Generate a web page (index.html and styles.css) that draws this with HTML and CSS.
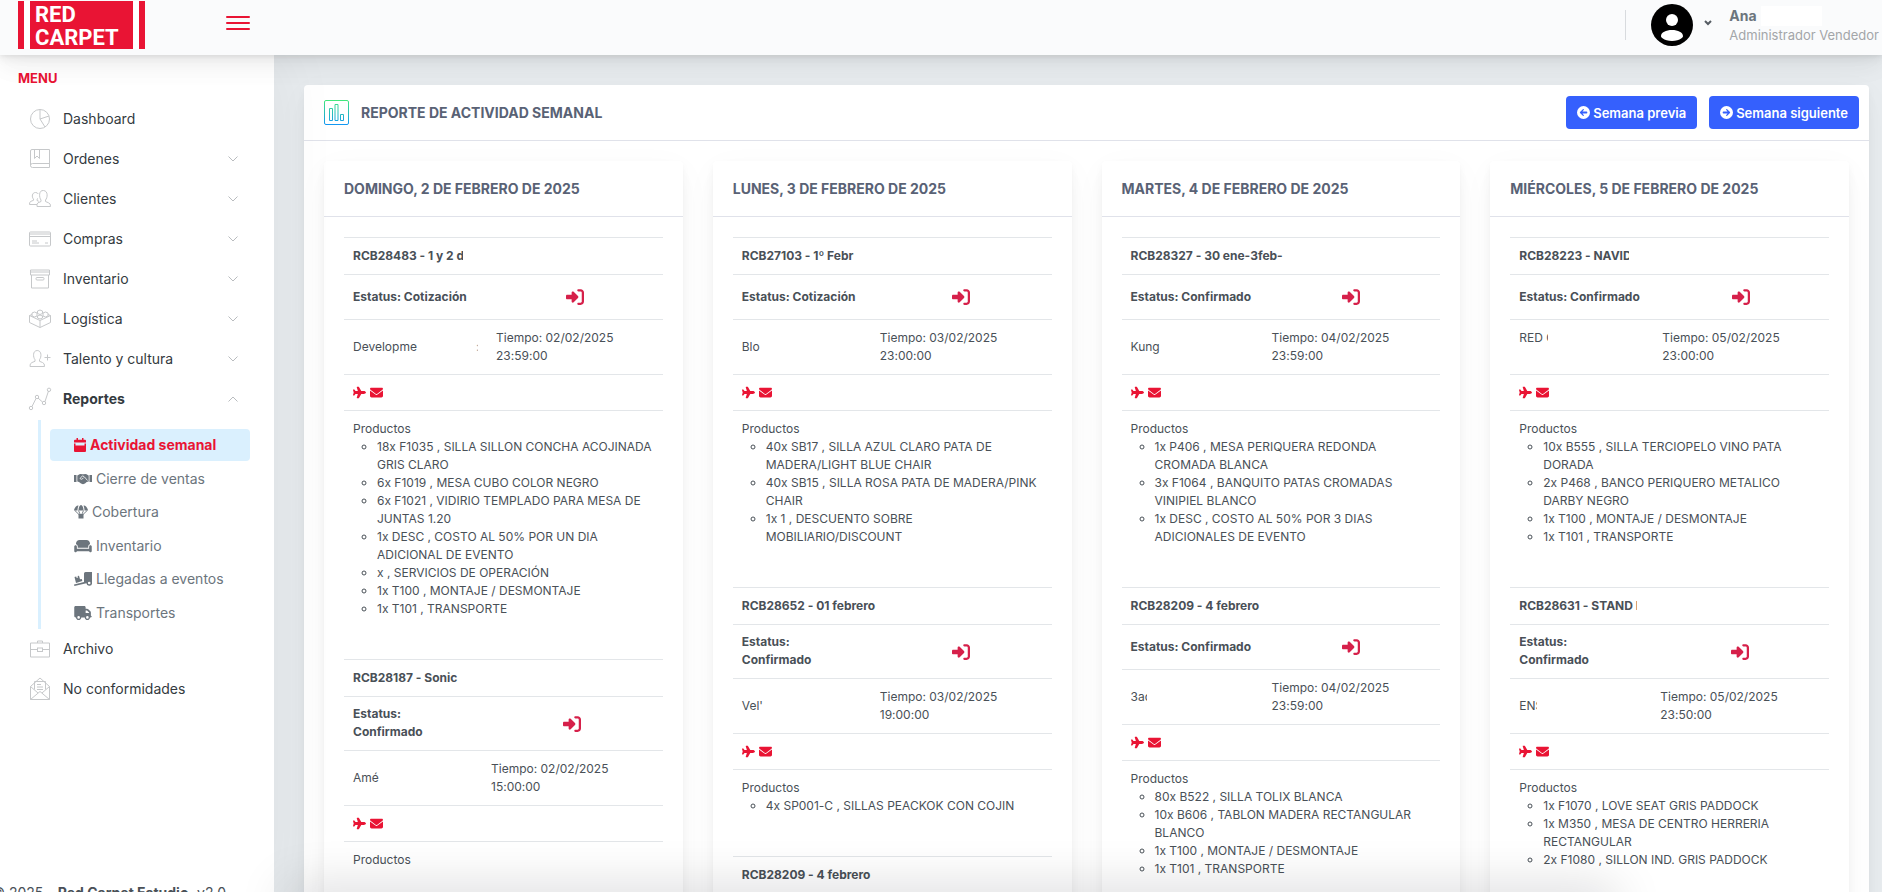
FILE: index.html
```html
<!DOCTYPE html>
<html lang="es">
<head>
<meta charset="utf-8">
<meta name="viewport" content="width=device-width, initial-scale=1">
<title>Reporte de actividad semanal</title>
<link rel="stylesheet" href="styles.css">
</head>
<body>
<svg class="sprite" aria-hidden="true">
  <symbol id="plane" viewBox="0 0 576 512"><path d="M482.3 192c34.2 0 93.7 29 93.7 64c0 36-59.5 64-93.7 64l-116.6 0L265.2 495.9c-5.7 10-16.3 16.1-27.8 16.1l-56.2 0c-10.6 0-18.3-10.2-15.4-20.4l49-171.6L112 320 68.8 377.6c-3 4-7.8 6.4-12.8 6.4l-42 0c-7.8 0-14-6.3-14-14c0-1.3 .2-2.6 .5-3.9L32 256 .5 145.9c-.4-1.3-.5-2.6-.5-3.9c0-7.8 6.3-14 14-14l42 0c5 0 9.8 2.4 12.8 6.4L112 192l102.9 0-49-171.6C162.9 10.2 170.6 0 181.2 0l56.2 0c11.5 0 22.1 6.2 27.8 16.1L365.7 192l116.6 0z"/></symbol>
  <symbol id="mail" viewBox="0 0 512 512"><path d="M48 64C21.5 64 0 85.5 0 112c0 15.1 7.1 29.3 19.2 38.4L236.8 313.6c11.4 8.5 27 8.5 38.4 0L492.8 150.4c12.1-9.1 19.2-23.3 19.2-38.4c0-26.5-21.5-48-48-48L48 64zM0 176L0 384c0 35.3 28.7 64 64 64l384 0c35.3 0 64-28.7 64-64l0-208L294.4 339.2c-22.8 17.1-54 17.1-76.8 0L0 176z"/></symbol>
  <symbol id="enter" viewBox="0 0 512 512"><path d="M217.9 105.9L340.7 228.7c7.2 7.2 11.3 17.1 11.3 27.3s-4.1 20.1-11.3 27.3L217.9 406.1c-6.4 6.4-15 9.9-24 9.9c-18.7 0-33.9-15.2-33.9-33.9l0-62.1L32 320c-17.7 0-32-14.3-32-32l0-64c0-17.7 14.3-32 32-32l128 0 0-62.1c0-18.7 15.2-33.9 33.9-33.9c9 0 17.6 3.6 24 9.9zM352 416l64 0c17.7 0 32-14.3 32-32l0-256c0-17.7-14.3-32-32-32l-64 0c-17.7 0-32-14.3-32-32s14.3-32 32-32l64 0c53 0 96 43 96 96l0 256c0 53-43 96-96 96l-64 0c-17.7 0-32-14.3-32-32s14.3-32 32-32z"/></symbol>
  <symbol id="circle-left" viewBox="0 0 512 512"><path d="M512 256A256 256 0 1 0 0 256a256 256 0 1 0 512 0zM231 127c9.4-9.4 24.6-9.4 33.9 0s9.4 24.6 0 33.9l-50 57L376 218c18 0 32 16 32 38s-14 38-32 38l-161.1 0 50 57c9.4 9.4 9.4 24.6 0 33.9s-24.6 9.4-33.9 0L119 273c-9.4-9.4-9.4-24.6 0-33.9L231 127z"/></symbol>
  <symbol id="circle-right" viewBox="0 0 512 512"><path transform="matrix(-1 0 0 1 512 0)" d="M512 256A256 256 0 1 0 0 256a256 256 0 1 0 512 0zM231 127c9.4-9.4 24.6-9.4 33.9 0s9.4 24.6 0 33.9l-50 57L376 218c18 0 32 16 32 38s-14 38-32 38l-161.1 0 50 57c9.4 9.4 9.4 24.6 0 33.9s-24.6 9.4-33.9 0L119 273c-9.4-9.4-9.4-24.6 0-33.9L231 127z"/></symbol>
  <symbol id="down" viewBox="0 0 10 6"><path d="M.5.5 5 5 9.5.5" fill="none" stroke="currentColor"/></symbol>
  <symbol id="up" viewBox="0 0 10 6"><path d="M.5 5.5 5 1l4.500 4.500" fill="none" stroke="currentColor"/></symbol>
</svg>

<header class="topbar">
  <a class="logo" href="#" aria-label="Red Carpet">
    <span class="logo-box"><span>RED</span><span>CARPET</span></span>
  </a>
  <button class="burger" type="button" aria-label="Menú"><i></i><i></i><i></i></button>
  <div class="user">
    <button class="user-btn" type="button" aria-label="Cuenta">
      <svg width="42" height="42" viewBox="0 0 42 42"><circle cx="21" cy="21" r="21"/><circle cx="21" cy="16" r="6" fill="#fff"/><path d="M21 26c6 0 11 2.500 11 6 0 1-.6 1.600-1.500 2.200C28 36 25 37 21 37s-7-1-9.500-2.800C10.600 33.600 10 33 10 32c0-3.500 5-6 11-6z" fill="#fff"/></svg>
      <svg class="caret" width="8" height="6" viewBox="0 0 8 6"><path d="M1 1l3 3 3-3" fill="none" stroke="#555c63" stroke-width="2"/></svg>
    </button>
    <div class="who">
      <div class="name">Ana <span class="blank"></span></div>
      <div class="role">Administrador Vendedor</div>
    </div>
  </div>
</header>

<div class="shell">
<nav class="sidebar">
  <h2 class="menu-title">MENU</h2>
  <ul class="menu">
    <li><a href="#"><svg class="ic" viewBox="0 0 22 22"><circle cx="11" cy="11" r="9.500"/><path d="M11 1.500V11l5 8M11 11l9-3"/></svg>Dashboard</a></li>
    <li><a href="#"><svg class="ic" viewBox="0 0 22 22"><path d="M3 1.500h17.500v18H3.500q-2 0-2-2V3q0-1.500 1.500-1.500M1.500 17.500q0-2 2-2h17M5.500 1.500v9L8 8l2.500 2.500v-9"/></svg>Ordenes<svg class="chev"><use href="#down"/></svg></a></li>
    <li><a href="#"><svg class="ic" viewBox="0 0 22 22"><path d="M8 18.500h13.500q.3-3-2-3.700l-3-1.300v-1.500c2-2 3-9-2-9.500-5-.5-4.500 7-2.500 9.500v1.500l-3 1.300Q7.500 15.500 8 18.500zM8 16.500H.5q-.3-2.500 1.500-3.200l2.500-1v-1.200C2.500 9 3 4.500 6.500 4.500q2 0 2.800 1.500M9 10.500l-1 .8v1.200l1.800.8"/></svg>Clientes<svg class="chev"><use href="#down"/></svg></a></li>
    <li><a href="#"><svg class="ic" viewBox="0 0 22 22"><rect x=".5" y="4" width="21" height="14" rx="1"/><path d="M.5 6h21M.5 8.500h21M3 13h5M3 15h7M16 15h3"/></svg>Compras<svg class="chev"><use href="#down"/></svg></a></li>
    <li><a href="#"><svg class="ic" viewBox="0 0 22 22"><path d="M1.500 2h19v5h-19zM2.500 7v13h17V7M1.500 4h19"/><rect x="7" y="9.500" width="8" height="2.500" rx="1"/></svg>Inventario<svg class="chev"><use href="#down"/></svg></a></li>
    <li><a href="#"><svg class="ic" viewBox="0 0 22 22"><path d="M.5 7.500v7L11 19.500l10.500-5v-7M.5 7.500 11 12.500l10.500-5M11 12.500v7M.5 7.500l2.500-1M21.500 7.500 19 6.500"/><path d="M3 8V5q2.500-2 5 0v3q-2.500 2-5 0M14 8V5q2.500-2 5 0v3q-2.500 2-5 0M8.500 10V8q2.500-2 5 0v2q-2.500 2-5 0M8.500 5.500V3q2.500-2 5 0v2.500q-2.500 2-5 0"/></svg>Logística<svg class="chev"><use href="#down"/></svg></a></li>
    <li><a href="#"><svg class="ic" viewBox="0 0 22 22"><path d="M1 18.500h14.500q.3-3.200-2-4l-3-1.200v-1.600c2-2.500 2.500-9-2.300-9.200-4.700.2-4.200 6.700-2.200 9.200v1.600l-3 1.200q-2.300.8-2 4zM15.500 9.500h6M18.500 6.500v6"/></svg>Talento y cultura<svg class="chev"><use href="#down"/></svg></a></li>
    <li>
      <a class="open" href="#"><svg class="ic" viewBox="0 0 22 22"><path d="m3 18.500 4-8M9 10l4.500 4M16 13.500 19.500 3"/><circle cx="2" cy="20" r="1.700"/><circle cx="8" cy="9" r="1.700"/><circle cx="15" cy="15" r="1.700"/><circle cx="20" cy="1.800" r="1.700"/></svg>Reportes<svg class="chev"><use href="#up"/></svg></a>
      <ul class="sub">
        <li><a class="active" href="#"><svg width="12" height="14" viewBox="0 0 12 14"><path d="M2.500 0h1.500v1.700h4V0h1.500v1.700H11q1 0 1 1V4.500H0V2.700q0-1 1-1h1.500zM0 5.500h1.500v2h9v-2H12V13q0 1-1 1H1q-1 0-1-1z"/></svg>Actividad semanal</a></li>
        <li><a href="#"><svg width="18" height="14" viewBox="0 0 18 14"><path d="M0 3h2.500v7H0zM15.500 3H18v7h-2.500z"/><path d="M3.300 3.500 6 2l3 .3L12 2l2.700 1.500V9.500l-2 .5-1.700 1.500-2 .8L7 11.500 5 10l-1.700-.5z"/><path d="M6 6.500 8.500 3.800 10.500 5l3 3.500M6 6.500l1.500.8L9.500 6" fill="none" stroke="#fff" stroke-width=".8"/></svg>Cierre de ventas</a></li>
        <li><a href="#"><svg width="14" height="14" viewBox="0 0 14 14"><path d="M0 5.500C.3 2.500 3 0 4.500.5 3.800 2 3.500 3.800 3.500 5.500zM4.500 5.500C4.500 2.500 5.600 0 7 0s2.500 2.500 2.500 5.500zM10.500 5.500c0-1.700-.3-3.500-1-5C11 0 13.700 2.500 14 5.500zM4.500 9h5v4.500h-5z"/><path d="M.8 5.500 5 9.500M13.200 5.500 9 9.500M4.500 5.500 6 9M9.500 5.500 8 9" fill="none" stroke="currentColor" stroke-width=".9"/></svg>Cobertura</a></li>
        <li><a href="#"><svg width="18" height="14" viewBox="0 0 640 512"><path d="M64 160C64 89.300 121.300 32 192 32l256 0c70.700 0 128 57.300 128 128l0 33.600c-36.500 7.400-64 39.700-64 78.400l0 48-384 0 0-48c0-38.700-27.500-71-64-78.400L64 160zM544 272c0-20.900 13.400-38.700 32-45.300c5-1.800 10.400-2.700 16-2.700c26.500 0 48 21.500 48 48l0 176c0 17.700-14.300 32-32 32l-32 0c-17.700 0-32-14.300-32-32L96 448c0 17.700-14.300 32-32 32l-32 0c-17.700 0-32-14.300-32-32L0 272c0-26.500 21.500-48 48-48c5.600 0 11 1 16 2.700c18.600 6.600 32 24.400 32 45.300l0 48 0 32 32 0 384 0 32 0 0-32 0-48z"/></svg>Inventario</a></li>
        <li><a href="#"><svg width="18" height="14" viewBox="0 0 18 14"><path fill-rule="evenodd" d="M11.500 0H18v10.500a2.800 2.800 0 1 1-5.600.7L.4 14 0 12.600 10 10V1.500Q10 0 11.500 0zM15.200 9.700a1.300 1.300 0 1 0 0 2.600 1.300 1.300 0 0 0 0-2.600z"/><path d="m.5 5 1.700-.5.5 1.500 1.300-.4-.4-1.500L5 3.700l1 3.600L7.800 7l.5 2-6.300 2z"/></svg>Llegadas a eventos</a></li>
        <li><a href="#"><svg width="18" height="14" viewBox="0 0 640 512"><path d="M48 0C21.500 0 0 21.500 0 48L0 368c0 26.500 21.500 48 48 48l16 0c0 53 43 96 96 96s96-43 96-96l128 0c0 53 43 96 96 96s96-43 96-96l32 0c17.700 0 32-14.300 32-32s-14.300-32-32-32l0-64 0-32 0-18.700c0-17-6.700-33.300-18.700-45.300L512 114.700c-12-12-28.300-18.700-45.300-18.700L416 96l0-48c0-26.500-21.500-48-48-48L48 0zM416 160l50.700 0L544 237.300l0 18.700-128 0 0-96zM112 416a48 48 0 1 1 96 0 48 48 0 1 1 -96 0zm368-48a48 48 0 1 1 0 96 48 48 0 1 1 0-96z"/></svg>Transportes</a></li>
      </ul>
    </li>
    <li><a href="#"><svg class="ic" viewBox="0 0 22 22"><path d="M1.500 5h19v14h-19zM1.500 11.500h7M13.500 11.500h7M8.500 5V3h5v2"/><rect x="8.500" y="10" width="5" height="3.500"/></svg>Archivo</a></li>
    <li><a href="#"><svg class="ic" viewBox="0 0 22 22"><path d="M1.500 8.500v13h19v-13L11 0 1.500 8.500zM1.500 8.500 9 15M20.500 8.500 13 15M1.500 21.500l9.500-8 9.500 8M5.500 11.500V3.500h11v8M8 6.500h4M8 9h6M8 11.500h6"/></svg>No conformidades</a></li>
  </ul>
  <p class="copyright">© 2025 - <b>Red Carpet Estudio.</b> v2.0</p>
</nav>

<main class="main">
  <section class="panel">
    <div class="panel-head">
      <svg class="chart" width="25" height="25" viewBox="0 0 25 25" stroke="url(#grad)"><defs><linearGradient id="grad" gradientUnits="userSpaceOnUse" x1="0" y1="0" x2="0" y2="25"><stop offset="0" stop-color="#43e97b"/><stop offset="1" stop-color="#1296f5"/></linearGradient></defs><rect x=".5" y=".5" width="24" height="24" rx="1.500"/><path d="M5.500 8.500h3v12h-3zM11 4.500h3v16h-3zM16.500 14.500h3v6h-3z"/></svg>
      <h1>REPORTE DE ACTIVIDAD SEMANAL</h1>
      <button class="btn" type="button"><svg><use href="#circle-left"/></svg>Semana previa</button>
      <button class="btn" type="button"><svg><use href="#circle-right"/></svg>Semana siguiente</button>
    </div>
    <div class="days">

      <article class="day">
        <h2>DOMINGO, 2 DE FEBRERO DE 2025</h2>
        <div class="orders">
          <table class="w45">
            <tr><th colspan="2"><span class="cut cut-110">RCB28483 - 1 y 2 d</span></th></tr>
            <tr><th>Estatus: Cotización</th><td class="go"><a href="#" aria-label="Abrir"><svg><use href="#enter"/></svg></a></td></tr>
            <tr><td><span class="split"><span>Developme</span><span class="cut cut-2">:</span></span></td><td class="when">Tiempo: 02/02/2025 23:59:00</td></tr>
            <tr><td colspan="2" class="flags"><svg><use href="#plane"/></svg><svg><use href="#mail"/></svg></td></tr>
            <tr><td colspan="2">Productos
              <ul><li>18x F1035 , SILLA SILLON CONCHA ACOJINADA GRIS CLARO</li><li>6x F1019 , MESA CUBO COLOR NEGRO</li><li>6x F1021 , VIDIRIO TEMPLADO PARA MESA DE JUNTAS 1.20</li><li>1x DESC , COSTO AL 50% POR UN DIA ADICIONAL DE EVENTO</li><li>x , SERVICIOS DE OPERACIÓN</li><li>1x T100 , MONTAJE / DESMONTAJE</li><li>1x T101 , TRANSPORTE</li></ul></td></tr>
          </table>
          <table class="w43">
            <tr><th colspan="2">RCB28187 - Sonic</th></tr>
            <tr class="tall"><th>Estatus:<br>Confirmado</th><td class="go"><a href="#" aria-label="Abrir"><svg><use href="#enter"/></svg></a></td></tr>
            <tr><td>Amé</td><td class="when">Tiempo: 02/02/2025 15:00:00</td></tr>
            <tr><td colspan="2" class="flags"><svg><use href="#plane"/></svg><svg><use href="#mail"/></svg></td></tr>
            <tr><td colspan="2">Productos</td></tr>
          </table>
        </div>
      </article>

      <article class="day">
        <h2>LUNES, 3 DE FEBRERO DE 2025</h2>
        <div class="orders">
          <table class="w43">
            <tr><th colspan="2">RCB27103 - 1º Febr</th></tr>
            <tr><th>Estatus: Cotización</th><td class="go"><a href="#" aria-label="Abrir"><svg><use href="#enter"/></svg></a></td></tr>
            <tr><td>Blo</td><td class="when">Tiempo: 03/02/2025 23:00:00</td></tr>
            <tr><td colspan="2" class="flags"><svg><use href="#plane"/></svg><svg><use href="#mail"/></svg></td></tr>
            <tr><td colspan="2">Productos
              <ul><li>40x SB17 , SILLA AZUL CLARO PATA DE MADERA/LIGHT BLUE CHAIR</li><li>40x SB15 , SILLA ROSA PATA DE MADERA/PINK CHAIR</li><li>1x 1 , DESCUENTO SOBRE MOBILIARIO/DISCOUNT</li></ul></td></tr>
          </table>
          <table class="w43">
            <tr><th colspan="2">RCB28652 - 01 febrero</th></tr>
            <tr class="tall"><th>Estatus:<br>Confirmado</th><td class="go"><a href="#" aria-label="Abrir"><svg><use href="#enter"/></svg></a></td></tr>
            <tr><td>Vel'</td><td class="when">Tiempo: 03/02/2025 19:00:00</td></tr>
            <tr><td colspan="2" class="flags"><svg><use href="#plane"/></svg><svg><use href="#mail"/></svg></td></tr>
            <tr><td colspan="2">Productos
              <ul><li>4x SP001-C , SILLAS PEACKOK CON COJIN</li></ul></td></tr>
          </table>
          <table class="w43">
            <tr><th colspan="2">RCB28209 - 4 febrero</th></tr>
          </table>
        </div>
      </article>

      <article class="day">
        <h2>MARTES, 4 DE FEBRERO DE 2025</h2>
        <div class="orders">
          <table class="w44">
            <tr><th colspan="2">RCB28327 - 30 ene-3feb-</th></tr>
            <tr><th>Estatus: Confirmado</th><td class="go"><a href="#" aria-label="Abrir"><svg><use href="#enter"/></svg></a></td></tr>
            <tr><td>Kung</td><td class="when">Tiempo: 04/02/2025 23:59:00</td></tr>
            <tr><td colspan="2" class="flags"><svg><use href="#plane"/></svg><svg><use href="#mail"/></svg></td></tr>
            <tr><td colspan="2">Productos
              <ul><li>1x P406 , MESA PERIQUERA REDONDA CROMADA BLANCA</li><li>3x F1064 , BANQUITO PATAS CROMADAS VINIPIEL BLANCO</li><li>1x DESC , COSTO AL 50% POR 3 DIAS ADICIONALES DE EVENTO</li></ul></td></tr>
          </table>
          <table class="w44">
            <tr><th colspan="2">RCB28209 - 4 febrero</th></tr>
            <tr><th>Estatus: Confirmado</th><td class="go"><a href="#" aria-label="Abrir"><svg><use href="#enter"/></svg></a></td></tr>
            <tr><td><span class="cut cut-16">3ac</span></td><td class="when">Tiempo: 04/02/2025 23:59:00</td></tr>
            <tr><td colspan="2" class="flags"><svg><use href="#plane"/></svg><svg><use href="#mail"/></svg></td></tr>
            <tr><td colspan="2">Productos
              <ul><li>80x B522 , SILLA TOLIX BLANCA</li><li>10x B606 , TABLON MADERA RECTANGULAR BLANCO</li><li>1x T100 , MONTAJE / DESMONTAJE</li><li>1x T101 , TRANSPORTE</li></ul></td></tr>
          </table>
        </div>
      </article>

      <article class="day">
        <h2>MIÉRCOLES, 5 DE FEBRERO DE 2025</h2>
        <div class="orders">
          <table class="w45">
            <tr><th colspan="2"><span class="cut cut-110">RCB28223 - NAVID</span></th></tr>
            <tr><th>Estatus: Confirmado</th><td class="go"><a href="#" aria-label="Abrir"><svg><use href="#enter"/></svg></a></td></tr>
            <tr><td class="top"><span class="cut cut-29">RED C</span></td><td class="when">Tiempo: 05/02/2025 23:00:00</td></tr>
            <tr><td colspan="2" class="flags"><svg><use href="#plane"/></svg><svg><use href="#mail"/></svg></td></tr>
            <tr><td colspan="2">Productos
              <ul><li>10x B555 , SILLA TERCIOPELO VINO PATA DORADA</li><li>2x P468 , BANCO PERIQUERO METALICO DARBY NEGRO</li><li>1x T100 , MONTAJE / DESMONTAJE</li><li>1x T101 , TRANSPORTE</li></ul></td></tr>
          </table>
          <table class="w44">
            <tr><th colspan="2"><span class="cut cut-118">RCB28631 - STAND D</span></th></tr>
            <tr class="tall"><th>Estatus:<br>Confirmado</th><td class="go"><a href="#" aria-label="Abrir"><svg><use href="#enter"/></svg></a></td></tr>
            <tr><td><span class="cut cut-18">ENS</span></td><td class="when">Tiempo: 05/02/2025 23:50:00</td></tr>
            <tr><td colspan="2" class="flags"><svg><use href="#plane"/></svg><svg><use href="#mail"/></svg></td></tr>
            <tr><td colspan="2">Productos
              <ul><li>1x F1070 , LOVE SEAT GRIS PADDOCK</li><li>1x M350 , MESA DE CENTRO HERRERIA RECTANGULAR</li><li>2x F1080 , SILLON IND. GRIS PADDOCK</li></ul></td></tr>
          </table>
        </div>
      </article>

    </div>
  </section>
</main>
</div>
<div class="foot-shadow"></div>
</body>
</html>
```

FILE: styles.css
```css
* { box-sizing: border-box; }
body {
  margin: 0;
  height: 100vh;
  overflow: hidden;
  display: flex;
  flex-direction: column;
  font: 14px/20px Inter, Roboto, sans-serif;
  font-feature-settings: "calt" 0;
  color: #495057;
  background: #e8ecef;
}
a { color: inherit; text-decoration: none; }
ul { list-style: none; margin: 0; padding: 0; }
h1, h2, p { margin: 0; }
button { font: inherit; border: 0; padding: 0; background: none; cursor: pointer; }
svg { fill: currentColor; flex: none; }
.sprite { position: absolute; width: 0; height: 0; }

.topbar {
  position: relative;
  z-index: 3;
  flex: none;
  height: 55px;
  display: flex;
  align-items: flex-start;
  padding: 1px 3px 0 18px;
  background: #fafbfc;
  box-shadow: 0 8px 35px rgba(4, 9, 20, .04), 0 15px 22px rgba(4, 9, 20, .03), 0 4px 9px rgba(4, 9, 20, .06), 0 2px 3px rgba(4, 9, 20, .04);
}
.logo {
  height: 48px;
  width: 127px;
  padding: 0 6px;
  background: linear-gradient(#e91434, #e91434) left / 6px 100% no-repeat, linear-gradient(#e91434, #e91434) right / 6px 100% no-repeat, #fff;
}
.logo-box {
  display: flex;
  flex-direction: column;
  height: 48px;
  margin: 0 6px;
  padding: 2px 0 0 5px;
  background: #e91434;
  color: #fff;
  font: bold 22px/23px Roboto, sans-serif;
}
.burger { width: 24px; margin: 15px 0 0 81px; display: grid; gap: 4px; }
.burger i { height: 2px; background: #e91434; border-radius: 1px; }
.user {
  margin: 9px 0 0 auto;
  height: 30px;
  padding-left: 25px;
  border-left: 1px solid #d8dbde;
  display: flex;
  align-items: center;
}
.user-btn { display: flex; align-items: center; gap: 11px; color: #000; }
.caret { margin-bottom: 4px; }
.who { margin-left: 17px; white-space: nowrap; }
.name { display: flex; gap: 4px; font-weight: 700; color: #6c757d; }
.blank { width: 61px; height: 20px; background: #fff; }
.role { font-size: 13px; line-height: 18px; color: #a3a6a9; }

.shell { flex: 1; min-height: 0; display: flex; }
.sidebar {
  position: relative;
  flex: 0 0 274px;
  padding: 14px 24px 0 18px;
  background: #fff;
  box-shadow: 7px 0 60px rgba(8, 10, 12, .05);
  color: #343a40;
}
.menu-title { font-size: 13px; line-height: 18px; font-weight: 700; color: #e91434; margin-bottom: 12px; }
.menu a { display: flex; align-items: center; height: 40px; padding-left: 11px; }
.ic { width: 22px; height: 22px; margin-right: 12px; fill: none; stroke: #c6c8ca; overflow: visible; }
.chev { width: 10px; height: 6px; margin: 0 12px 0 auto; color: #b9bcbf; }
.menu .open { font-weight: 700; }
.sub {
  display: flex;
  flex-direction: column;
  justify-content: space-between;
  height: 209px;
  margin: 1px 0 0 20px;
  padding: 9px 0 0 9px;
  border-left: 3px solid #d9f0ff;
  color: #6c757d;
}
.menu .sub a { height: 32px; padding-left: 24px; gap: 4px; border-radius: 4px; }
.menu .sub .active { background: #daf0fe; color: #e91434; font-weight: 700; }
.copyright { position: absolute; right: 48px; top: 828px; white-space: nowrap; color: #495057; }

.main { flex: 1; min-width: 0; padding: 30px 13px 0 30px; }
.panel, .day {
  background: #fff;
  border-radius: 4px;
  box-shadow: 0 8px 35px rgba(4, 9, 20, .03), 0 15px 22px rgba(4, 9, 20, .02), 0 4px 9px rgba(4, 9, 20, .04), 0 2px 3px rgba(4, 9, 20, .02);
}
.panel-head {
  display: flex;
  align-items: center;
  height: 56px;
  padding: 0 10px 0 20px;
  border-bottom: 1px solid #e0e2ea;
}
.chart { fill: none; }
h1, .day h2 { font-size: 14px; font-weight: 700; color: #596275; }
h1 { margin: 0 auto 0 12px; }
.btn {
  display: flex;
  align-items: center;
  gap: 3px;
  height: 33px;
  margin-left: 12px;
  padding: 0 11px;
  border-radius: 4px;
  background: #3560fd;
  color: #fff;
  font-size: 13px;
  font-weight: 600;
}
.btn svg { width: 13px; height: 13px; }
.days { display: grid; grid-template-columns: repeat(4, minmax(0, 1fr)); gap: 30px; padding: 20px; }
.day h2 { height: 56px; line-height: 55px; padding-left: 20px; border-bottom: 1px solid #e0e2ea; }
.orders { padding: 20px; }

/* each order is a two-column grid; its rows dissolve into it */
table {
  display: grid;
  grid-template-columns: var(--first) 1fr;
  margin-bottom: 16px;
  font-size: 12px;
  line-height: 18px;
}
tbody, tr { display: contents; }
.w43 { --first: 138px; }
.w44 { --first: 141px; }
.w45 { --first: 143px; }
th, td {
  display: flex;
  flex-direction: column;
  justify-content: center;
  padding: 9px;
  border-top: 1px solid #e3e6e9;
  text-align: left;
}
th { font-weight: 700; white-space: nowrap; }
[colspan="2"] { grid-column: 1 / -1; }
.tall th { padding: 8px 9px 9px; }
.go { align-items: center; min-height: 45px; color: #d6204a; }
.go a { display: flex; }
.go svg { width: 18px; height: 18px; }
td.when { padding-right: 40px; }
td.top { justify-content: flex-start; }
td.flags { flex-direction: row; justify-content: flex-start; align-items: center; gap: 4px; height: 36px; color: #e91434; }
.flags svg { width: 13px; height: 13px; }
td ul { list-style: circle; padding-left: 24px; margin-bottom: 16px; }
.split { display: flex; justify-content: space-between; }
.cut { display: block; overflow: hidden; white-space: nowrap; }
.cut-2 { width: 2px; color: #a3a6a9; }
.cut-16 { width: 16px; }
.cut-18 { width: 18px; }
.cut-29 { width: 29px; }
.cut-110 { width: 110px; }
.cut-118 { width: 118px; }

.foot-shadow {
  position: fixed;
  z-index: 4;
  left: 290px;
  right: 270px;
  top: 100%;
  height: 30px;
  pointer-events: none;
  box-shadow: 0 0 50px 4px rgba(4, 9, 20, .16);
}
```
